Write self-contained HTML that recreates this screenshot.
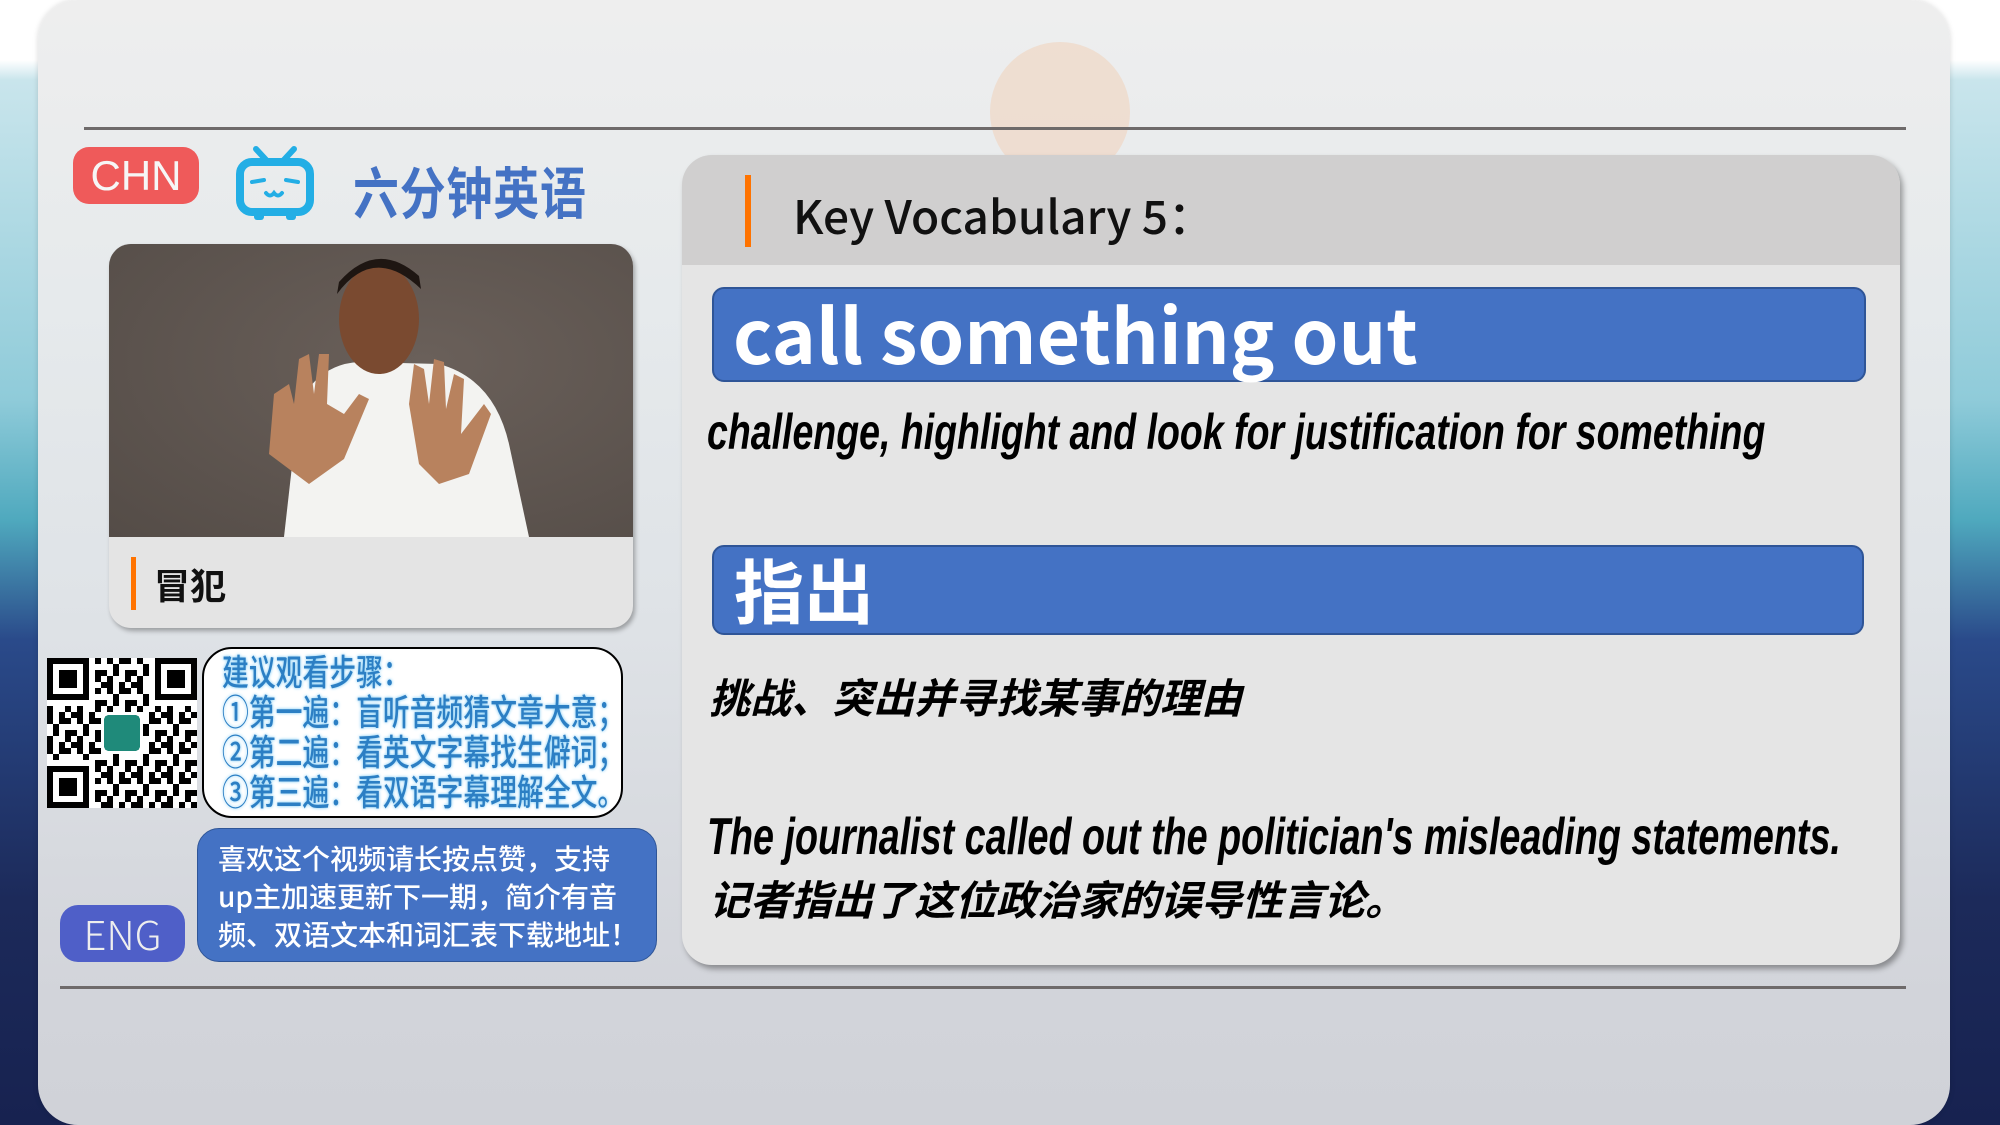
<!DOCTYPE html>
<html><head><meta charset="utf-8"><style>
*{margin:0;padding:0;box-sizing:border-box}
body{width:2000px;height:1125px;overflow:hidden;position:relative;font-family:"Liberation Sans","Noto Sans CJK SC",sans-serif;
background:linear-gradient(180deg,#fff 0,#fff 60px,#c9e5ec 80px,#8fcbd9 400px,#4fa9be 520px,#2a4a8a 640px,#1c2a5a 900px,#172250 1125px)}
.abs{position:absolute}
#panel{left:38px;top:0;width:1912px;height:1125px;border-radius:40px;background:linear-gradient(180deg,#eeeeee 0,#e6eaec 300px,#dfe3e7 600px,#d2d4da 1000px,#d0d2d8 1125px);box-shadow:0 0 6px rgba(0,0,0,.15)}
.line{height:3px;background:#6e6a6a}
.cn{font-family:"Noto Sans CJK SC","Liberation Sans",sans-serif}
</style></head><body>
<div id="panel" class="abs"></div>
<div class="abs" style="left:990px;top:42px;width:140px;height:140px;border-radius:50%;background:#efd9c9;opacity:.8"></div>
<div class="abs line" style="left:84px;top:127px;width:1822px"></div>
<div class="abs line" style="left:60px;top:986px;width:1846px"></div>

<div class="abs" style="left:73px;top:147px;width:126px;height:57px;border-radius:16px;background:#ef5a5a;color:#f6f6f6;font-size:42px;line-height:57px;text-align:center">CHN</div>
<svg class="abs" style="left:236px;top:146px" width="78" height="76" viewBox="0 0 78 76"><path d="M20 3 L32 16 M58 3 L46 16" stroke="#23aee5" stroke-width="6" stroke-linecap="round"/><rect x="4" y="16" width="70" height="50" rx="12" fill="none" stroke="#23aee5" stroke-width="8"/><path d="M16 36 L28 34 M50 34 L62 36 M30 47 q4 5 8 0 q4 5 8 0" stroke="#23aee5" stroke-width="4" fill="none" stroke-linecap="round"/><rect x="18" y="66" width="10" height="8" rx="3" fill="#23aee5"/><rect x="50" y="66" width="10" height="8" rx="3" fill="#23aee5"/></svg>
<div class="abs cn" style="left:353px;top:150px;font-size:56px;font-weight:bold;color:#4472c4;letter-spacing:1px;white-space:nowrap;transform:scaleX(.82);transform-origin:left top">六分钟英语</div>

<div class="abs" style="left:109px;top:244px;width:524px;height:384px;border-radius:22px;background:#e4e4e4;overflow:hidden;box-shadow:2px 3px 5px rgba(0,0,0,.3)">
<div style="position:absolute;left:0;top:0;width:524px;height:293px;background:radial-gradient(ellipse at 60% 40%,#6a605a,#544c47)"></div>
<svg style="position:absolute;left:0;top:0" width="524" height="293" viewBox="0 0 524 293"><path d="M175 293 L190 160 Q210 120 250 118 L330 120 Q385 135 400 200 L420 293Z" fill="#f3f3f1"/><ellipse cx="270" cy="75" rx="40" ry="55" fill="#7a4a30"/><path d="M228 50 Q265 0 312 45 L310 32 Q268 -5 230 38Z" fill="#1e1612"/><path d="M160 210 L165 150 L180 140 L185 160 L190 115 L200 110 L205 150 L210 110 L220 110 L218 160 L235 170 L250 150 L260 155 L235 215 L200 240Z" fill="#b8825e"/><path d="M310 220 L300 160 L305 120 L315 125 L320 160 L325 115 L335 118 L337 165 L345 130 L355 135 L352 190 L375 160 L382 170 L360 230 L330 240Z" fill="#b8825e"/></svg>
<div style="position:absolute;left:22px;top:313px;width:5px;height:53px;background:#ff7300"></div>
<div class="cn" style="position:absolute;left:45px;top:314px;font-size:36px;font-weight:bold;color:#111">冒犯</div>
</div>

<svg class="abs" style="left:47px;top:658px" width="150" height="150" viewBox="0 0 25 25" shape-rendering="crispEdges"><defs><pattern id="q" width="5" height="5" patternUnits="userSpaceOnUse"><path d="M0 0h1v1h-1zM2 0h2v1h-2zM1 1h1v2h-1zM3 2h2v1h-2zM0 3h1v2h-1zM2 4h1v1h-1zM4 4h1v1h-1zM3 3h1v1h-1z" fill="#000"/></pattern></defs><rect width="25" height="25" fill="#fff"/><rect width="25" height="25" fill="url(#q)"/><g fill="#fff"><rect x="0" y="0" width="8" height="8"/><rect x="17" y="0" width="8" height="8"/><rect x="0" y="17" width="8" height="8"/></g><g fill="#000"><path d="M0 0h7v7h-7zM18 0h7v7h-7zM0 18h7v7h-7z"/></g><g fill="#fff"><path d="M1 1h5v5h-5zM19 1h5v5h-5zM1 19h5v5h-5z"/></g><g fill="#000"><path d="M2 2h3v3h-3zM20 2h3v3h-3zM2 20h3v3h-3z"/></g><rect x="9" y="9" width="7" height="7" fill="#fff"/><rect x="9.5" y="9.5" width="6" height="6" rx=".8" fill="#1f8a7a"/></svg>
<div class="abs" style="left:202px;top:647px;width:421px;height:171px;border:2px solid #000;border-radius:30px;background:#fff"></div>
<div class="abs cn" style="left:222px;top:650px;font-size:36px;line-height:40px;color:#2c7fc4;font-weight:500;white-space:nowrap;transform:scaleX(.745);transform-origin:left top;text-shadow:0 0 4px #6cc4f4">建议观看步骤：<br>①第一遍：盲听音频猜文章大意；<br>②第二遍：看英文字幕找生僻词；<br>③第三遍：看双语字幕理解全文。</div>
<div class="abs cn" style="left:197px;top:828px;width:460px;height:134px;border-radius:22px;background:#4472c4;border:1px solid #2f5597;color:#fff;font-size:28px;line-height:38px;padding:10px 0 0 20px;white-space:nowrap;font-weight:500">喜欢这个视频请长按点赞，支持<br>up主加速更新下一期，简介有音<br>频、双语文本和词汇表下载地址！</div>
<div class="abs cn" style="left:60px;top:905px;width:125px;height:57px;border-radius:18px;background:#4f5fc8;color:#eee;font-size:40px;line-height:57px;text-align:center;font-weight:300">ENG</div>

<div class="abs" style="left:682px;top:155px;width:1218px;height:810px;border-radius:30px;background:#e5e5e5;overflow:hidden;box-shadow:3px 4px 6px rgba(0,0,0,.35)">
<div style="position:absolute;left:0;top:0;width:1218px;height:110px;background:#d0cfcf"></div>
<div style="position:absolute;left:63px;top:20px;width:6px;height:72px;background:#ff7300"></div>
<div class="cn" style="position:absolute;left:111px;top:27px;font-size:46px;font-weight:500;color:#111">Key Vocabulary 5：</div>
<div style="position:absolute;left:30px;top:132px;width:1154px;height:95px;border-radius:12px;background:#4472c4;border:2px solid #2f5597"></div>
<div class="cn" style="position:absolute;left:51px;top:122px;font-size:75px;font-weight:bold;color:#fff;white-space:nowrap">call something out</div>
<div style="position:absolute;left:25px;top:248px;font-size:50px;font-weight:bold;font-style:italic;color:#000;white-space:nowrap;transform:scaleX(.75);transform-origin:left top">challenge, highlight and look for justification for something</div>
<div style="position:absolute;left:30px;top:390px;width:1152px;height:90px;border-radius:12px;background:#4472c4;border:2px solid #2f5597"></div>
<div class="cn" style="position:absolute;left:52px;top:383px;font-size:70px;font-weight:bold;color:#fff">指出</div>
<div class="cn" style="position:absolute;left:27px;top:510px;font-size:41px;font-weight:bold;font-style:italic;color:#000;white-space:nowrap">挑战、突出并寻找某事的理由</div>
<div style="position:absolute;left:25px;top:652px;font-size:52px;font-weight:bold;font-style:italic;color:#000;white-space:nowrap;transform:scaleX(.725);transform-origin:left top">The journalist called out the politician's misleading statements.</div>
<div class="cn" style="position:absolute;left:27px;top:712px;font-size:41px;font-weight:bold;font-style:italic;color:#000;white-space:nowrap">记者指出了这位政治家的误导性言论。</div>
</div>
</body></html>
